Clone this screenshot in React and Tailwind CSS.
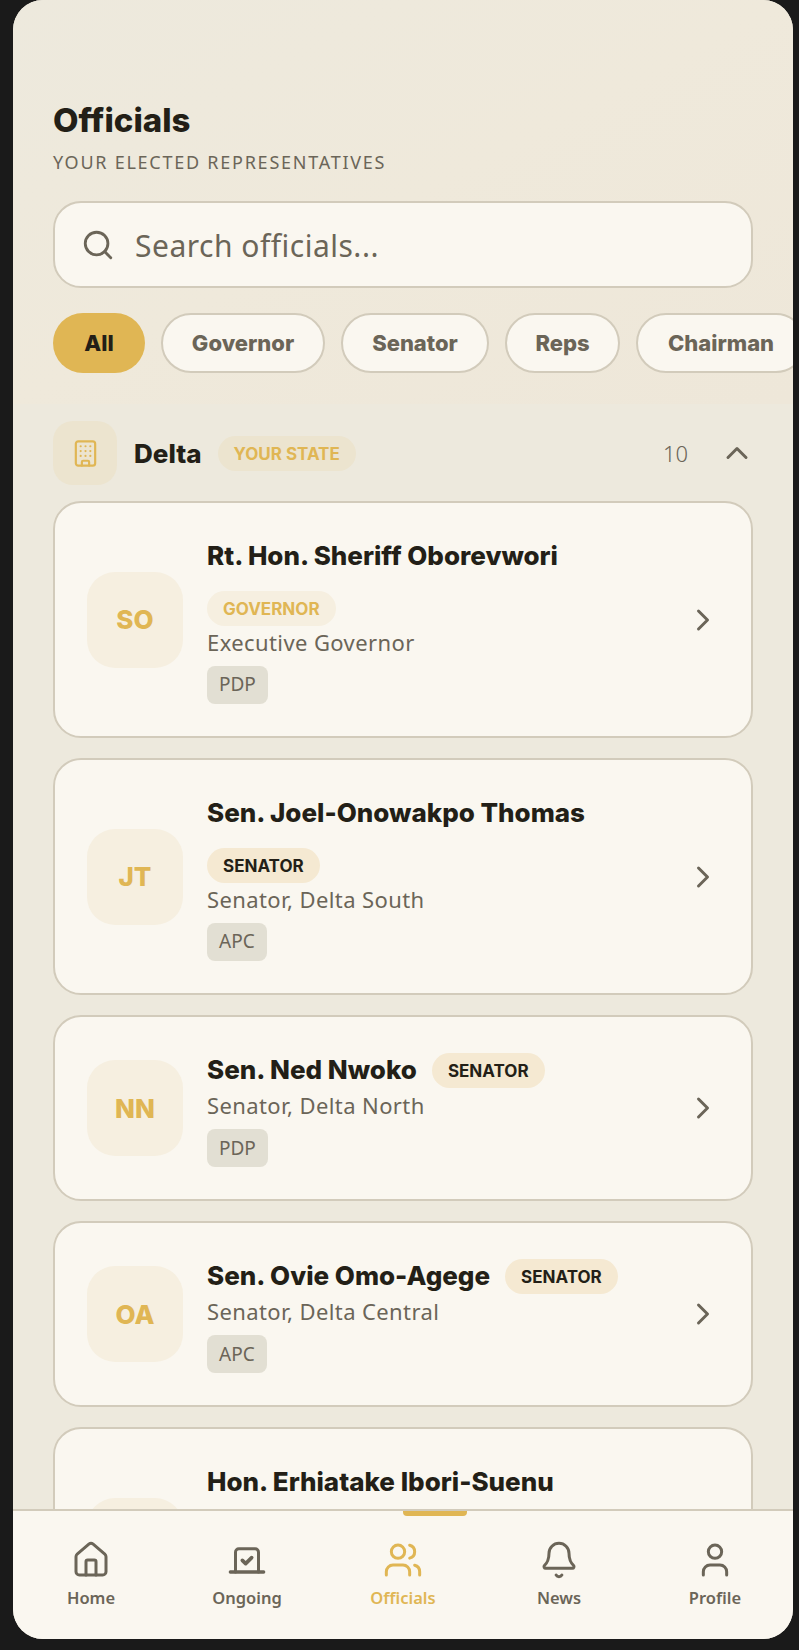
import React from "react";
import { Search, Building, ChevronUp, ChevronRight, House, Users, Bell, User } from "lucide-react";

const body = "font-['Noto_Sans','Liberation_Sans',sans-serif]";
const bold = "font-['Inter','Liberation_Sans',sans-serif]";

function LaptopCheck({ size, strokeWidth }) {
  return (
    <svg width={size} height={size} viewBox="0 0 24 24" fill="none" stroke="currentColor" strokeWidth={strokeWidth} strokeLinecap="round" strokeLinejoin="round">
      <path d="M5.1 19.2V7.3a2 2 0 0 1 2-2h9.8a2 2 0 0 1 2 2v11.9" />
      <path d="M2 19.2h20" strokeWidth={2} />
      <path d="m9.2 12.2 2 2 3.6-3.6" strokeWidth={2.2} />
    </svg>
  );
}

function Role({ label, tone }) {
  const cls = tone === "gold" ? "bg-[#f6efe0] text-[#e0b654]" : "bg-[#f5e9d2] text-[#231f17]";
  return (
    <span className={`${bold} ${cls} inline-flex h-[35px] items-center rounded-full px-4 pt-[2px] text-[17px] leading-none font-bold shrink-0`}>
      {label}
    </span>
  );
}

function Card({ initials, name, role, tone, title, party, inline }) {
  return (
    <div className={`flex items-center rounded-[28px] border-2 border-[#d2cbbb] bg-[#faf7f0] pl-[32px] pr-[32px] ${inline ? "h-[186px]" : "h-[237px]"}`}>
      <div className={`${bold} flex h-[96px] w-[96px] shrink-0 items-center justify-center rounded-[28px] bg-[#f6efe0] text-[26px] font-extrabold text-[#e0b654]`}>
        {initials}
      </div>
      <div className={`ml-[24px] flex min-w-0 flex-1 flex-col items-start ${inline ? "pt-[3px]" : "pt-[1px]"}`}>
        {inline ? (
          <div className="flex items-center gap-[15px]">
            <span className={`${bold} text-[26px] leading-[36px] font-extrabold text-[#231f17]`}>{name}</span>
            <Role label={role} tone={tone} />
          </div>
        ) : (
          <>
            <span className={`${bold} text-[26px] leading-[38px] font-extrabold text-[#231f17]`}>{name}</span>
            <span className="mt-[16px] flex"><Role label={role} tone={tone} /></span>
          </>
        )}
        <span className={`${body} ${inline ? "mt-[1px]" : ""} text-[22px] leading-[32px] tracking-[0.4px] text-[#6b6558]`}>{title}</span>
        <span className={`${body} mt-[8px] flex h-[38px] items-center rounded-[8px] bg-[#e2dfd3] px-3 text-[19px] text-[#6b6558]`}>{party}</span>
      </div>
      <ChevronRight size={36} strokeWidth={2} className="mr-[-2px] shrink-0 text-[#6b6558]" />
    </div>
  );
}

function NavItem({ icon: I, label, active }) {
  const c = active ? "text-[#e0b654]" : "text-[#6b6558]";
  return (
    <div className={`relative flex flex-1 flex-col items-center pt-[29px] ${c}`}>
      {active && <span className="absolute top-0 left-1/2 h-[5px] w-[64px] rounded-b-[4px] bg-[#e0b654]" />}
      <I size={40} strokeWidth={1.8} />
      <span className={`${body} mt-[6px] text-[16.5px] leading-[24px] font-semibold`}>{label}</span>
    </div>
  );
}

export default function App() {
  return (
    <div className="h-[1650px] w-[799px] bg-[#1a1a1a] pl-[13px] pr-[6px] pb-[11px]">
      <div className="flex h-full flex-col overflow-hidden rounded-[30px] bg-[#ede9dd]">
        <div className="flex min-h-0 flex-1 flex-col overflow-hidden">
          <header className="h-[404px] shrink-0 bg-linear-to-br from-[#ede9dd] via-[#efe9db] to-[#eee7d9] pl-[40px] pt-[97px]">
            <h1 className={`${bold} text-[33px] leading-[46px] font-extrabold text-[#231f17]`}>Officials</h1>
            <p className={`${body} mt-[7px] text-[18px] leading-[24px] tracking-[1.75px] text-[#6b6558]`}>YOUR ELECTED REPRESENTATIVES</p>
            <div className="mt-[27px] mr-[40px] flex h-[87px] items-center rounded-[28px] border-2 border-[#d2cbbb] bg-[#faf7f0] pl-[26px]">
              <Search size={34} strokeWidth={2} className="shrink-0 text-[#6b6558]" />
              <span className={`${body} ml-[20px] pt-[2px] text-[30px] tracking-[0.5px] text-[#6b6558]`}>Search officials...</span>
            </div>
            <div className="mt-[25px] flex gap-4 overflow-hidden">
              <span className={`${bold} flex h-[60px] w-[92px] shrink-0 items-center justify-center rounded-full bg-[#e0b654] pt-[1px] text-[22px] font-extrabold text-[#231f17]`}>All</span>
              {[["Governor", "w-[164px]"], ["Senator", "w-[148px]"], ["Reps", "w-[115px]"], ["Chairman", "w-[170px]"]].map(([t, w]) => (
                <span key={t} className={`${bold} ${w} flex h-[60px] shrink-0 items-center justify-center rounded-full border-2 border-[#d2cbbb] bg-[#faf7f0] pt-[1px] text-[22px] font-extrabold text-[#6b6558]`}>{t}</span>
              ))}
            </div>
          </header>
          <section className="flex flex-col px-[40px]">
            <div className="mt-[17px] flex items-center">
              <div className="flex h-[64px] w-[64px] items-center justify-center rounded-[20px] bg-[#ece4cf]">
                <Building size={29} strokeWidth={1.8} className="text-[#e0b654]" />
              </div>
              <span className={`${bold} ml-[17px] text-[26px] font-extrabold text-[#231f17]`}>Delta</span>
              <span className={`${bold} ml-[16px] flex h-[35px] items-center rounded-full bg-[#ece4cf] px-4 pt-[3px] text-[17px] font-bold text-[#e0b654]`}>YOUR STATE</span>
              <span className={`${body} ml-auto text-[22px] font-light text-[#6b6558]`}>10</span>
              <ChevronUp size={36} strokeWidth={2} className="mr-[-2px] ml-[31px] text-[#6b6558]" />
            </div>
            <div className="mt-[16px] flex flex-col gap-[20px]">
              <Card initials="SO" name="Rt. Hon. Sheriff Oborevwori" role="GOVERNOR" tone="gold" title="Executive Governor" party="PDP" />
              <Card initials="JT" name="Sen. Joel-Onowakpo Thomas" role="SENATOR" title="Senator, Delta South" party="APC" />
              <Card inline initials="NN" name="Sen. Ned Nwoko" role="SENATOR" title="Senator, Delta North" party="PDP" />
              <Card inline initials="OA" name="Sen. Ovie Omo-Agege" role="SENATOR" title="Senator, Delta Central" party="APC" />
              <Card initials="HE" name="Hon. Erhiatake Ibori-Suenu" role="REPS" title="Member" party="PDP" />
            </div>
          </section>
        </div>
        <nav className="flex h-[130px] shrink-0 border-t-2 border-[#d2cbbb] bg-[#faf7f0]">
          <NavItem icon={House} label="Home" />
          <NavItem icon={LaptopCheck} label="Ongoing" />
          <NavItem icon={Users} label="Officials" active />
          <NavItem icon={Bell} label="News" />
          <NavItem icon={User} label="Profile" />
        </nav>
      </div>
    </div>
  );
}
